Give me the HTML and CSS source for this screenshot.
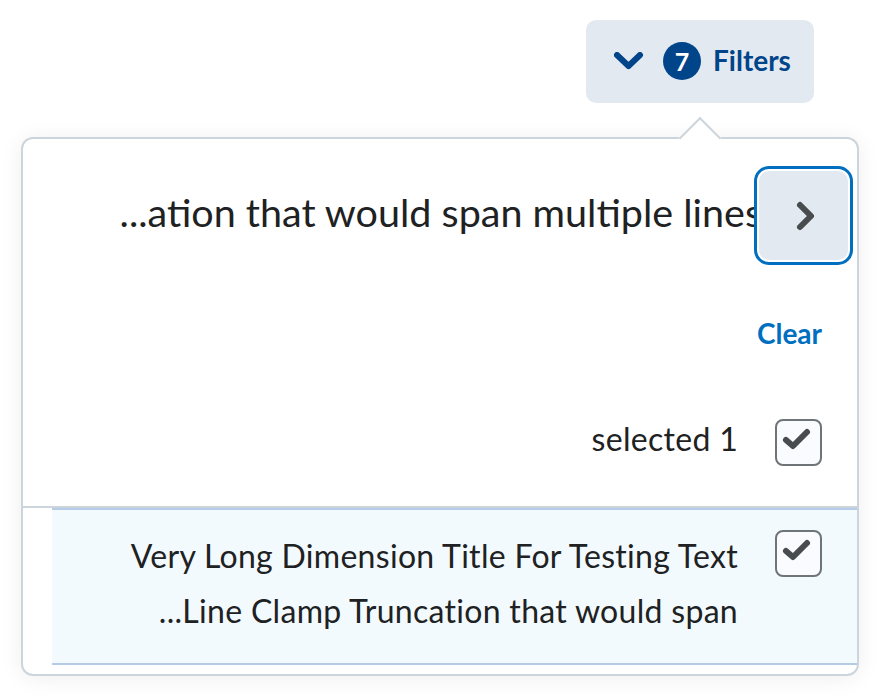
FILE: index.html
```html
<!DOCTYPE html>
<html lang="en">
<head>
<meta charset="utf-8">
<title>Filters</title>
<link rel="stylesheet" href="styles.css">
</head>
<body>
<div class="page">
  <div class="filter-bar">
    <button class="filter-btn" type="button">
      <svg class="chev-down" width="30" height="18" viewBox="0 0 30 18" aria-hidden="true">
        <path d="M3 3 L14.5 14 L26 3" fill="none" stroke="#004489" stroke-width="6" stroke-linecap="round" stroke-linejoin="round"/>
      </svg>
      <span class="badge">7</span>
      <span class="filter-label">Filters</span>
    </button>
  </div>

  <div class="popover">
    <span class="pointer"></span>
    <div class="header">
      <div class="title">...ation that would span multiple lines</div>
      <div class="next-ring">
        <div class="next-btn">
          <svg width="24" height="36" viewBox="0 0 24 36" aria-hidden="true">
            <path d="M6 7 L17 18 L6 29" fill="none" stroke="#494c4e" stroke-width="6" stroke-linecap="round" stroke-linejoin="round"/>
          </svg>
        </div>
      </div>
    </div>

    <div class="clear-row"><span class="clear">Clear</span></div>

    <div class="option">
      <span class="opt-text single">selected 1</span>
      <span class="checkbox">
        <svg width="43" height="43" viewBox="0 0 43 43" aria-hidden="true">
          <path d="M9 19 L16 25 L30 11" fill="none" stroke="#494c4e" stroke-width="6" stroke-linecap="round" stroke-linejoin="round"/>
        </svg>
      </span>
    </div>

    <div class="separator"></div>

    <div class="option nested">
      <span class="opt-text multi">
        <span class="line">Very Long Dimension Title For Testing Text</span>
        <span class="line">...Line Clamp Truncation that would span</span>
      </span>
      <span class="checkbox">
        <svg width="43" height="43" viewBox="0 0 43 43" aria-hidden="true">
          <path d="M9 19 L16 25 L30 11" fill="none" stroke="#494c4e" stroke-width="6" stroke-linecap="round" stroke-linejoin="round"/>
        </svg>
      </span>
    </div>
  </div>
</div>
</body>
</html>
```

FILE: styles.css
```css
* {
  box-sizing: border-box;
}

html, body {
  margin: 0;
  padding: 0;
  background: #ffffff;
}

body {
  font-family: Lato, "Noto Sans", sans-serif;
  color: #202122;
}

.page {
  padding-top: 20px;
  width: 880px;
  height: 698px;
}

.filter-bar {
  display: flex;
  justify-content: flex-end;
  padding-right: 66px;
}

.filter-btn {
  width: 228px;
  height: 83px;
  border: none;
  border-radius: 10px;
  background: #e3e9f1;
  display: flex;
  align-items: center;
  padding: 0 0 0 28px;
  font-family: Lato, "Noto Sans", sans-serif;
  cursor: pointer;
}

.chev-down {
  display: block;
  flex: none;
  margin-top: -1px;
}

.badge {
  flex: none;
  width: 38px;
  height: 38px;
  margin-left: 19px;
  margin-top: -2px;
  border-radius: 50%;
  background: #004489;
  color: #ffffff;
  font-weight: 700;
  font-size: 25px;
  line-height: 38px;
  text-align: center;
}

.filter-label {
  margin-left: 12px;
  margin-top: -4px;
  font-size: 28px;
  font-weight: 700;
  color: #004489;
  line-height: 34px;
}

.popover {
  position: relative;
  margin: 34px 21px 0 21px;
  height: 539px;
  border: 2px solid #cdd5dc;
  border-radius: 12px;
  background: #ffffff;
  box-shadow: 0 2px 22px rgba(0, 0, 0, 0.07);
}

.pointer {
  position: absolute;
  left: 662px;
  top: -16px;
  width: 30px;
  height: 30px;
  background: #ffffff;
  border-top: 2px solid #cdd5dc;
  border-left: 2px solid #cdd5dc;
  transform: rotate(45deg);
  z-index: 1;
}

.header {
  display: flex;
  justify-content: flex-end;
  align-items: flex-start;
  margin-top: 27px;
  height: 99px;
  padding-right: 4px;
}

.title {
  font-size: 39.5px;
  line-height: 47px;
  margin-top: 22px;
  margin-right: -8px;
  white-space: nowrap;
  color: #202122;
}

.next-ring {
  flex: none;
  width: 99px;
  height: 99px;
  border: 3px solid #006fbf;
  border-radius: 15px;
  padding: 2px;
  background: #ffffff;
}

.next-btn {
  width: 100%;
  height: 100%;
  border-radius: 10px;
  background: #e3e9f1;
  display: flex;
  align-items: center;
  justify-content: center;
}

.next-btn svg {
  display: block;
  margin-left: 4px;
}

.clear-row {
  display: flex;
  justify-content: flex-end;
  padding-right: 35px;
  margin-top: 51px;
}

.clear {
  font-size: 28px;
  font-weight: 700;
  line-height: 34px;
  color: #006fbf;
}

.option {
  display: flex;
  justify-content: flex-end;
  align-items: flex-start;
  padding-right: 35px;
  margin-top: 69px;
  padding-bottom: 40px;
}

.opt-text {
  font-size: 32px;
  letter-spacing: 0.3px;
  color: #202122;
  text-align: right;
  margin-right: 37px;
}

.opt-text.single {
  line-height: 38px;
  margin-top: 1px;
}

.opt-text.multi {
  display: flex;
  flex-direction: column;
  align-items: flex-end;
  line-height: 55px;
}

.line {
  display: block;
  white-space: nowrap;
}

.checkbox {
  flex: none;
  width: 47px;
  height: 47px;
  border: 2px solid #6e7477;
  border-radius: 8px;
  background: #f9fbff;
  display: flex;
  align-items: center;
  justify-content: center;
}

.checkbox svg {
  display: block;
}

.separator {
  height: 2px;
  background: #cdd5dc;
}

.option.nested {
  margin: 0 0 0 29px;
  padding-top: 18px;
  padding-bottom: 25px;
  border-top: 2px solid #b6cbe8;
  border-bottom: 2px solid #b6cbe8;
  background: #f3fafe;
}

.option.nested .checkbox {
  margin-top: 2px;
}
```
